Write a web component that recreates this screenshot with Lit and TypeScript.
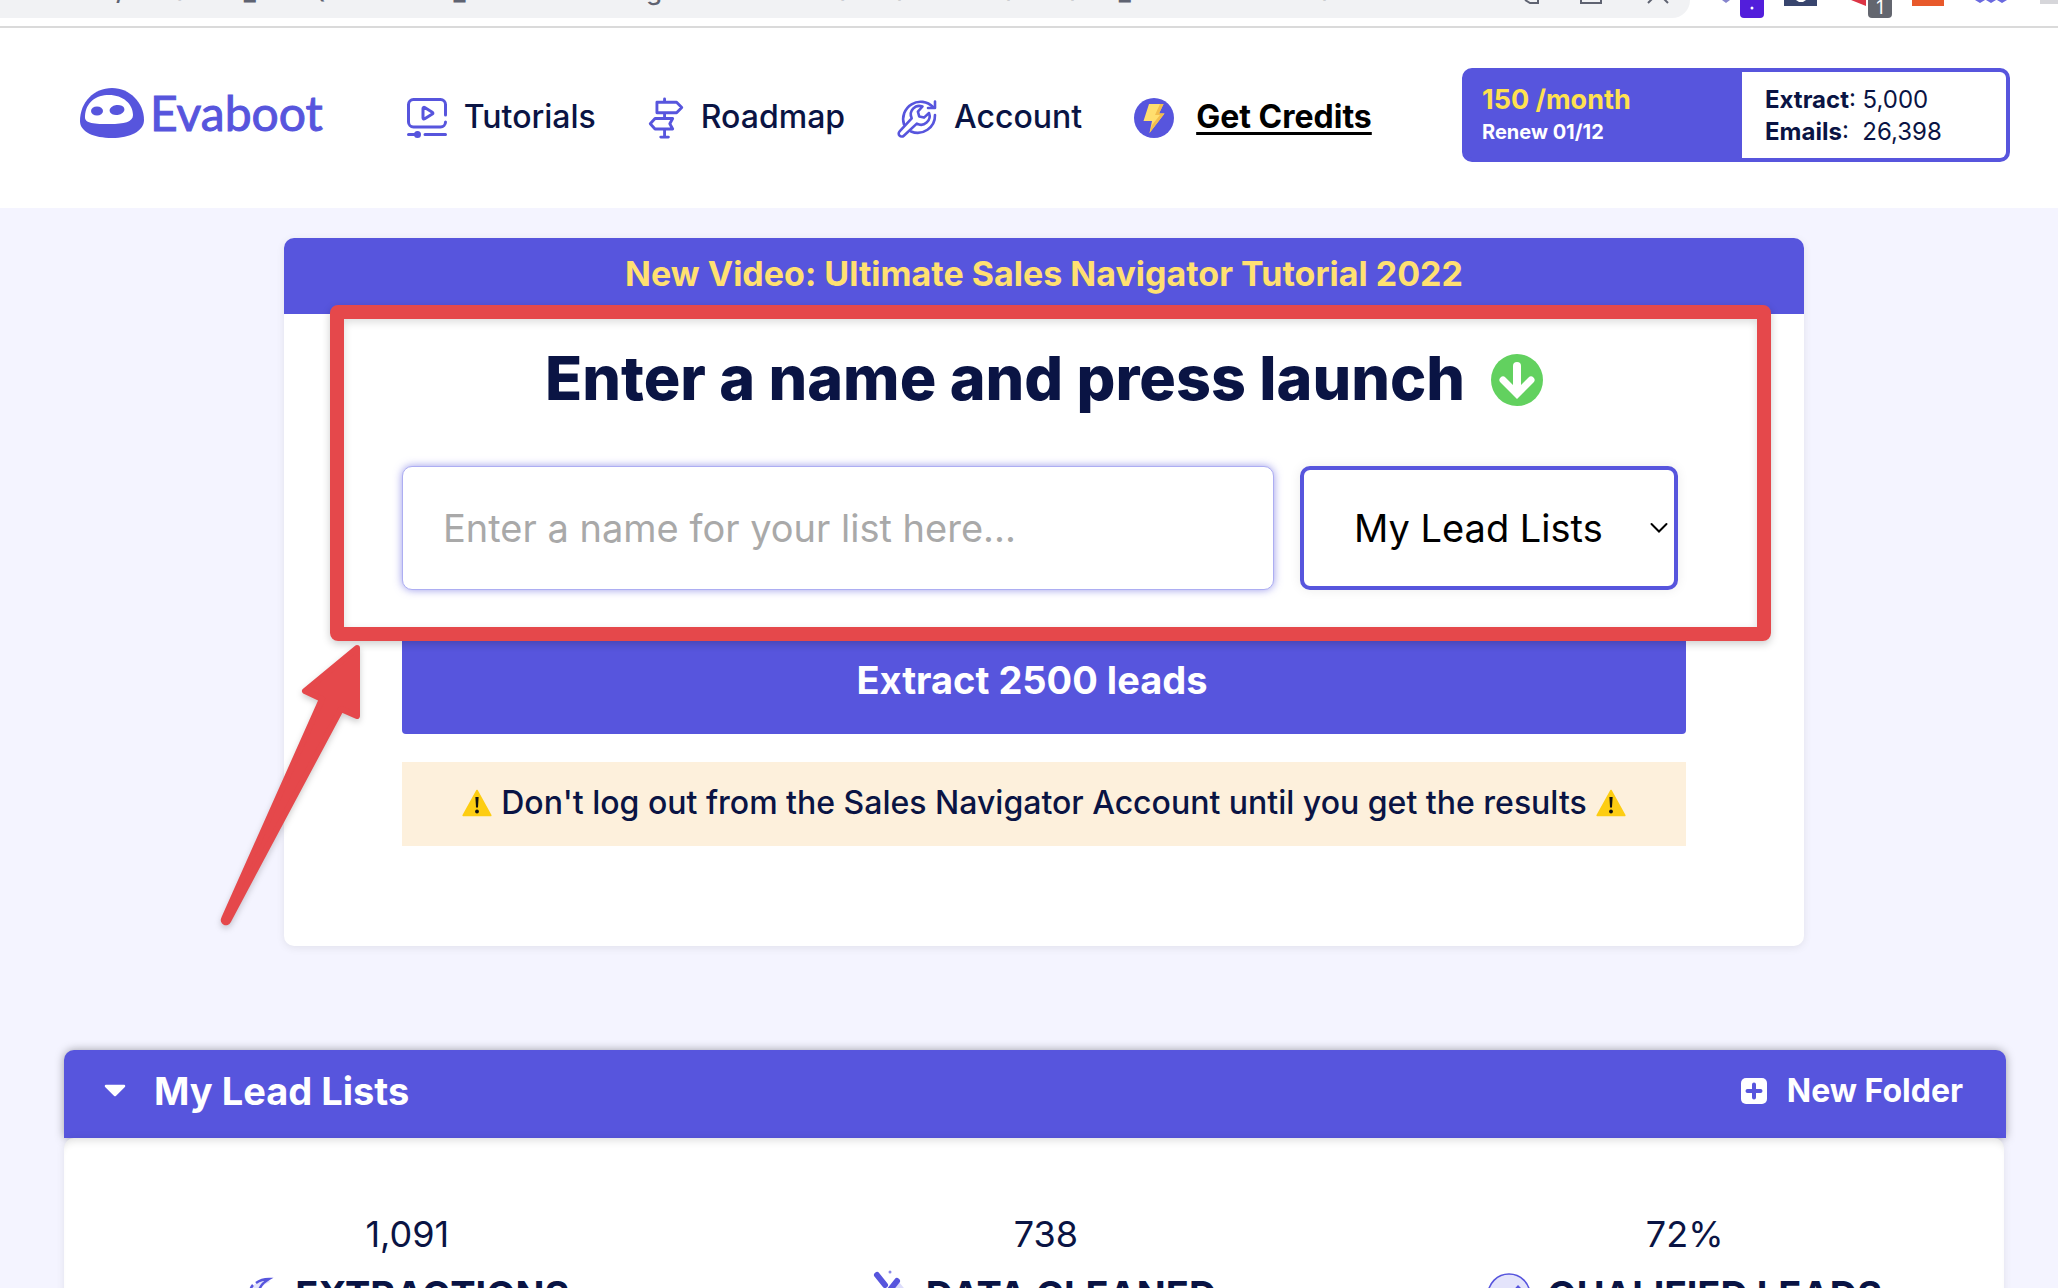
import { LitElement, html, css, svg } from "lit";
import { customElement, state } from "lit/decorators.js";

const lists = ["My Lead Lists"];

const icons = {
  tutorials: svg`<svg class="nav-icon" viewBox="0 0 40 40" fill="none" stroke="#5755dd" stroke-width="3" stroke-linecap="round" stroke-linejoin="round" aria-hidden="true">
    <path d="M38.500 17V6.500a5 5 0 0 0-5-5h-27a5 5 0 0 0-5 5V24a5 5 0 0 0 5 5h27a5 5 0 0 0 5-5"/>
    <path d="M16 10.500c0-1 .8-1.500 1.700-1l7.600 4.700c.8.500.8 1.400 0 1.900l-7.600 4.700c-.9.500-1.700 0-1.700-1z"/>
    <path d="M1.500 36.500H11M18 36.500h20.500"/><circle cx="10.500" cy="36.500" r="2" fill="#5755dd"/>
  </svg>`,
  roadmap: svg`<svg class="nav-icon sign" viewBox="2 0 36 44" fill="none" stroke="#5755dd" stroke-width="3" stroke-linecap="round" stroke-linejoin="round" aria-hidden="true">
    <path d="M18.500 2v3M10.500 5.500h20.600l5.400 5.500-5.400 5.500H10.500zM18.500 17v5M27 22.500H8.500L3.500 28l5 5.500H27L24 28zM18.500 34v7M14.500 42h8"/>
  </svg>`,
  account: svg`<svg class="nav-icon" viewBox="0 0 40 40" fill="none" stroke="#5755dd" stroke-width="2.600" stroke-linecap="round" stroke-linejoin="round" aria-hidden="true">
    <path d="M36 9A17.400 17.400 0 0 0 7 26.500"/><path d="M38 3.500V10h-7"/>
    <path d="M38 17A17.400 17.400 0 0 1 14 33.500"/>
    <path d="M25.500 8.500a8.600 8.600 0 0 0-10.800 11.800L2.600 33.400a3 3 0 0 0 4.200 4.300l13-12.100A8.600 8.600 0 0 0 32 15l-5 4.600-4.800-1.200-1.300-4.700z"/>
  </svg>`,
  credits: svg`<svg class="nav-icon" viewBox="0 0 40 40" aria-hidden="true">
    <circle cx="20" cy="20" r="20" fill="#5755dd"/>
    <path d="M15 6h14.500L25 15.500h5.500L15.500 35 18 23H9.500z" fill="#ffde6e"/>
    <path d="M29.500 6L25 15.500h5.500L15.500 35 18 27l8-10h-5l5-11z" fill="#f3bd4c"/>
  </svg>`,
  warning: svg`<svg class="warn" viewBox="0 0 30 28" aria-hidden="true">
    <path d="M15 1.500L28.800 26.500H1.200z" fill="#fdcd12" stroke="#fdcd12" stroke-width="1.600" stroke-linejoin="round"/>
    <path d="M13.400 8h3.200l-.6 10.500h-2z" fill="#111"/><circle cx="15" cy="22.500" r="1.900" fill="#111"/>
  </svg>`,
  rocket: svg`<svg class="stat-icon" viewBox="0 0 34 38" fill="none" aria-hidden="true">
    <path d="M6 20C4 11 11 4 24 3l1 3c-6 2-9 5-10 10l6 8z" fill="#e4e4fb"/>
    <path d="M5 18C5 15 6 11 8 9M11 7C15 4 19 3 24 3c-5 3-9 6-10 12l5 8M6 12l5 2" stroke="#5755dd" stroke-width="2.500"/>
    <path d="M28 16l6 3-5 2z" fill="#8c8be8"/>
  </svg>`,
  clean: svg`<svg class="stat-icon" viewBox="0 0 34 38" fill="none" aria-hidden="true">
    <path d="M23 6l13 16H14z" fill="#dcdcfb"/>
    <path d="M1 -1l8 10M21 5L6 24" stroke="#5755dd" stroke-width="6" stroke-linecap="round"/>
    <circle cx="14" cy="-4" r="1.500" fill="#8c8be8"/>
  </svg>`,
  qualified: svg`<svg class="stat-icon wide" viewBox="0 0 44 44" fill="none" aria-hidden="true">
    <circle cx="22" cy="22" r="21" fill="#e4e4fb" stroke="#5755dd" stroke-width="1.600"/>
    <path d="M12 22l3-3 5 5 11-12 4 4-15 17z" fill="#5755dd"/>
  </svg>`,
};

const stats = [
  { value: "1,091", label: "EXTRACTIONS", icon: icons.rocket },
  { value: "738", label: "DATA CLEANED", icon: icons.clean },
  { value: "72%", label: "QUALIFIED LEADS", icon: icons.qualified },
];

@customElement("app-root")
export class AppRoot extends LitElement {
  @state() private open = true;

  static styles = css`
    :host {
      display: block;
      height: 100vh;
      overflow: hidden;
      background: #f4f4ff;
      color: #0a1444;
      font-family: Inter, "Liberation Sans", sans-serif;
      font-weight: 400;
    }
    * { box-sizing: border-box; }
    a { color: inherit; text-decoration: none; }
    button, input, select { font: inherit; margin: 0; }
    svg { display: block; flex: none; overflow: visible; }

    .browser {
      display: grid;
      grid-template-columns: minmax(0, 1fr) 318px;
      column-gap: 50px;
      height: 28px;
      overflow: hidden;
      background: #fff;
      border-bottom: 2px solid #dadada;
    }
    .address {
      display: flex;
      justify-content: space-between;
      height: 18px;
      overflow: hidden;
      padding-right: 22px;
      background: #f1f2f4;
      border-bottom-right-radius: 18px;
      color: #5f6371;
    }
    .url { margin-top: -25px; font-size: 26px; line-height: 32px; font-weight: 500; white-space: nowrap; }

    .header {
      display: flex;
      align-items: center;
      justify-content: space-between;
      padding: 40px 48px 46px 80px;
      background: #fff;
    }
    .left { display: flex; align-items: center; gap: 84px; }
    .brand { display: flex; align-items: center; gap: 6px; padding-bottom: 4px; color: #5755dd; font-family: Lato, sans-serif; font-size: 48px; line-height: 50px; -webkit-text-stroke: 1px #5755dd; }
    .brand svg { width: 64px; height: 50px; }
    .nav { display: flex; gap: 52px; padding-top: 6px; font-size: 32px; line-height: 40px; font-weight: 500; }
    .nav a { display: flex; align-items: center; gap: 17px; white-space: nowrap; }
    .nav span { padding-bottom: 3px; }
    .nav-icon { width: 40px; height: 42px; }
    .sign { width: 36px; }
    .nav .credits { gap: 22px; color: #000; font-weight: 700; }
    .credits span { text-decoration: underline; text-decoration-thickness: 3px; text-underline-offset: 4px; }

    .usage {
      display: grid;
      grid-template-columns: 276px 264px;
      border: 4px solid #5755dd;
      border-radius: 10px;
      background: #5755dd;
      line-height: 32px;
      overflow: hidden;
    }
    .plan { padding: 12px 16px 10px; color: #fff; font-size: 20px; font-weight: 700; }
    .plan strong { display: block; color: #ffe14f; font-size: 27px; font-weight: 700; }
    .plan span, .counts span { display: block; }
    .counts { padding: 12px 23px 10px; background: #fff; font-size: 24px; white-space: pre; }

    .main { padding-top: 30px; }
    .card {
      position: relative;
      margin: 0 254px 104px 284px;
      padding-bottom: 100px;
      background: #fff;
      border-radius: 10px;
      box-shadow: 0 2px 8px rgba(0, 0, 0, 0.08);
    }
    .banner {
      display: block;
      padding: 14px 16px 18px;
      border-radius: 10px 10px 0 0;
      background: #5755dd;
      color: #ffe071;
      text-align: center;
      font-size: 34px;
      line-height: 44px;
      font-weight: 700;
    }
    .content { padding: 32px 118px 0; }
    .title {
      display: flex;
      justify-content: center;
      align-items: center;
      gap: 26px;
      margin: 0 0 52px;
      font-size: 61px;
      line-height: 64px;
      font-weight: 800;
      white-space: nowrap;
    }
    .title span { padding-bottom: 4px; }
    .title svg { width: 52px; height: 52px; }
    .fields { display: grid; grid-template-columns: minmax(0, 1fr) 378px; gap: 26px; padding-right: 8px; font-size: 38px; }
    .name {
      width: 100%;
      height: 124px;
      padding: 0 40px;
      border: 1px solid #adaef2;
      border-radius: 10px;
      outline: none;
      background: #fff;
      color: #0a1444;
      box-shadow: 0 0 8px rgba(87, 85, 221, 0.6);
    }
    .name::placeholder { color: #a9a9a9; opacity: 1; }
    .pick { display: grid; align-items: center; }
    .pick > * { grid-area: 1 / 1; }
    .pick select {
      width: 100%;
      height: 124px;
      padding: 0 50px;
      appearance: none;
      border: 4px solid #5755dd;
      border-radius: 10px;
      background: #fff;
      color: #000;
      box-shadow: 0 0 12px rgba(0, 0, 0, 0.08);
    }
    .pick svg { justify-self: end; width: 18px; height: 12px; margin-right: 10px; pointer-events: none; }
    .launch {
      display: block;
      width: 100%;
      margin-top: 38px;
      padding: 28px 24px 30px 0;
      border: 0;
      border-radius: 4px;
      background: #5755dd;
      color: #fff;
      font-size: 38px;
      line-height: 48px;
      font-weight: 700;
    }
    .notice {
      display: flex;
      justify-content: center;
      align-items: center;
      gap: 9px;
      margin: 28px 0 0;
      padding: 19px 0 21px;
      background: #fdf0dc;
      font-size: 32px;
      line-height: 44px;
      font-weight: 500;
      white-space: nowrap;
    }
    .warn { width: 30px; height: 28px; }

    .frame {
      position: absolute;
      top: 67px;
      left: 46px;
      right: 33px;
      height: 336px;
      border: 14px solid #e5484b;
      border-radius: 8px;
      box-shadow: 0 3px 8px rgba(0, 0, 0, 0.2), inset 0 3px 8px rgba(0, 0, 0, 0.14);
      pointer-events: none;
    }
    .arrow {
      position: absolute;
      top: 400px;
      left: -67px;
      width: 150px;
      height: 296px;
      filter: drop-shadow(0 3px 3px rgba(0, 0, 0, 0.2));
      pointer-events: none;
    }

    .folder { margin: 0 52px 0 64px; }
    .bar {
      display: flex;
      justify-content: space-between;
      height: 88px;
      padding: 17px 43px 23px 40px;
      border-radius: 10px 10px 0 0;
      background: #5755dd;
      box-shadow: 0 0 10px rgba(0, 0, 0, 0.35);
      color: #fff;
      line-height: 48px;
    }
    .bar h2 { margin: 0; font-size: 38px; font-weight: 700; }
    .bar button { display: flex; align-items: center; padding: 0; border: 0; background: none; color: inherit; font-weight: 700; cursor: pointer; line-height: 48px; }
    .toggle { gap: 28px; font-size: 38px; }
    .toggle svg { width: 22px; height: 14px; }
    .bar .add { gap: 20px; font-size: 32px; }
    .add svg { width: 26px; height: 26px; }
    .panel {
      margin-right: 2px;
      padding: 72px 0 40px 24px;
      display: grid;
      grid-template-columns: repeat(3, 1fr);
      border-radius: 10px;
      background: #fff;
      box-shadow: 0 0 8px rgba(0, 0, 0, 0.08), inset 0 8px 8px -6px rgba(0, 0, 0, 0.14);
      text-align: center;
      font-size: 36px;
      line-height: 48px;
    }
    .stat { display: grid; row-gap: 13px; }
    .label { display: flex; justify-content: center; align-items: center; gap: 16px; font-size: 38px; font-weight: 700; white-space: nowrap; }
    .stat-icon { width: 34px; height: 44px; }
    .wide { width: 44px; }
  `;

  render() {
    return html`
      <div class="browser">
        <div class="address">
          <span class="url">oost.com/extracted_list?Q=numbers_filters-selecting&amp;sessionId=leads-also-for-all-teams_results-recent-and-new</span>
          <svg width="144" height="18" viewBox="0 0 144 18" fill="none" stroke="#5f6371" stroke-width="2" aria-hidden="true">
            <path d="M1 0l5 3h8V0M57 0v3h20V0M124 3l4-4M144 3l-4-4"/>
          </svg>
        </div>
        <svg width="318" height="20" viewBox="0 0 318 20" aria-hidden="true">
          <path d="M-18 0h8l-4 3z" fill="#8584cd"/>
          <path d="M0 0h24v14a4 4 0 0 1-4 4H4a4 4 0 0 1-4-4z" fill="#521edb"/>
          <circle cx="12" cy="8" r="1.500" fill="#fff"/>
          <path d="M44 0h33v6H44z" fill="#38456e"/><path d="M56 0h10l-3 2h-4z" fill="#fff"/>
          <path d="M111 0h15v6z" fill="#dc3545"/>
          <path d="M128 0h24v14a4 4 0 0 1-4 4h-16a4 4 0 0 1-4-4z" fill="#63666f"/>
          <text x="140" y="14" text-anchor="middle" fill="#fff" font-size="18">1</text>
          <path d="M172 0h32v6h-32z" fill="#e8592b"/>
          <path d="M235 0h10l-5 3zM246 0h10l-5 3zM257 0h10l-5 3z" fill="#6a69df"/>
          <path d="M300 0h18v4h-18z" fill="#d6d6da"/>
        </svg>
      </div>

      <header class="header">
        <div class="left">
          <a class="brand" href="#">
            <svg viewBox="0 0 64 50" aria-hidden="true">
              <path d="M0 33C0 14 14 0 32 0s32 15 32 32c0 11-14 18-32 18S0 44 0 33z" fill="#5755dd"/>
              <path d="M5 28C6 14 16 7 29 7c14 0 24 9 24 20 0 7-9 9-23 9-15 0-26 0-25-8z" fill="#fff"/>
              <ellipse cx="17" cy="23" rx="6" ry="4.600" fill="#5755dd"/>
              <ellipse cx="37" cy="22" rx="7.500" ry="5" fill="#5755dd" transform="rotate(-8 37 22)"/>
            </svg>
            <span>Evaboot</span>
          </a>
          <nav class="nav">
            <a href="#tutorials">${icons.tutorials}<span>Tutorials</span></a>
            <a href="#roadmap">${icons.roadmap}<span>Roadmap</span></a>
            <a href="#account">${icons.account}<span>Account</span></a>
            <a class="credits" href="#credits">${icons.credits}<span>Get Credits</span></a>
          </nav>
        </div>
        <div class="usage">
          <div class="plan"><strong>150 /month</strong><span>Renew 01/12</span></div>
          <div class="counts"><span><b>Extract</b>: 5,000</span><span><b>Emails</b>:  26,398</span></div>
        </div>
      </header>

      <main class="main">
        <section class="card">
          <a class="banner" href="#video">New Video: Ultimate Sales Navigator Tutorial 2022</a>
          <div class="content">
            <h1 class="title">
              <span>Enter a name and press launch</span>
              <svg viewBox="0 0 52 52" aria-hidden="true">
                <circle cx="26" cy="26" r="26" fill="#62d15f"/>
                <path d="M26 12v22" fill="none" stroke="#fff" stroke-width="8" stroke-linecap="round"/>
                <path d="M12 26l14 14 14-14" fill="none" stroke="#fff" stroke-width="7" stroke-linecap="round"/>
              </svg>
            </h1>
            <div class="fields">
              <input class="name" type="text" aria-label="List name" placeholder="Enter a name for your list here..." />
              <div class="pick">
                <select aria-label="Folder">${lists.map((l) => html`<option>${l}</option>`)}</select>
                <svg viewBox="0 0 18 12" fill="none" stroke="#000" stroke-width="2" stroke-linecap="round" aria-hidden="true"><path d="M1.500 2L9 9.500 16.500 2"/></svg>
              </div>
            </div>
            <button class="launch" type="button">Extract 2500 leads</button>
            <p class="notice">${icons.warning}<span>Don't log out from the Sales Navigator Account until you get the results</span>${icons.warning}</p>
          </div>
          <div class="frame"></div>
          <svg class="arrow" viewBox="0 0 150 296" aria-hidden="true">
            <path d="M140 10L88 53l17 8L7 281a2 2 0 0 0 4 2L124 71l16 7z" fill="#e5484b" stroke="#e5484b" stroke-width="6" stroke-linejoin="round"/>
          </svg>
        </section>

        <section class="folder">
          <div class="bar">
            <h2>
              <button class="toggle" type="button" aria-expanded=${this.open} @click=${() => (this.open = !this.open)}>
                <svg viewBox="0 0 22 14" aria-hidden="true"><path d="M2 2h18l-9 9z" fill="#fff" stroke="#fff" stroke-width="2.500" stroke-linejoin="round"/></svg>
                My Lead Lists
              </button>
            </h2>
            <button class="add" type="button">
              <svg viewBox="0 0 26 26" aria-hidden="true"><rect width="26" height="26" rx="5" fill="#fff"/><path d="M13 6.500v13M6.500 13h13" stroke="#5755dd" stroke-width="4" stroke-linecap="round"/></svg>
              New Folder
            </button>
          </div>
          ${this.open
            ? html`<div class="panel">
                ${stats.map((s) => html`<div class="stat"><span>${s.value}</span><span class="label">${s.icon}${s.label}</span></div>`)}
              </div>`
            : null}
        </section>
      </main>
    `;
  }
}
